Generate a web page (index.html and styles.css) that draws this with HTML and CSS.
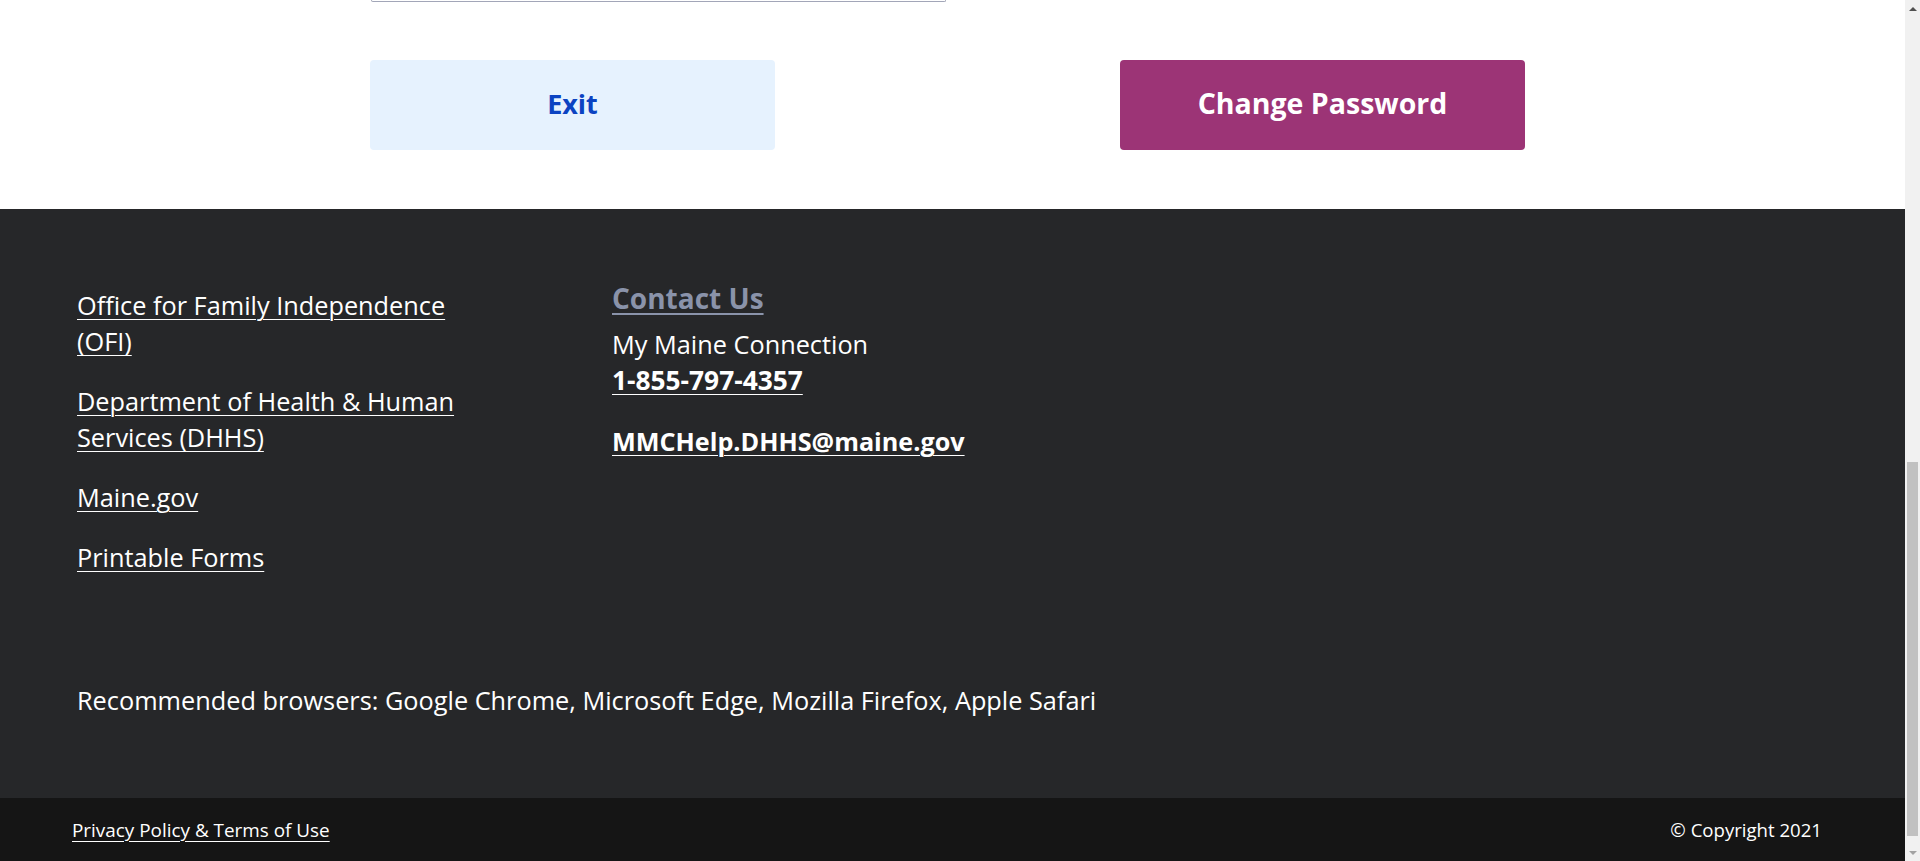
FILE: index.html
```html
<!DOCTYPE html>
<html lang="en">
<head>
<meta charset="utf-8">
<title>Change Password - My Maine Connection</title>
<link rel="stylesheet" href="styles.css">
</head>
<body>
<div class="window">
  <div class="page">
    <section class="form-tail">
      <div class="input-stub"></div>
      <div class="actions">
        <button class="btn btn-exit" type="button">Exit</button>
        <button class="btn btn-primary" type="button">Change Password</button>
      </div>
    </section>
    <footer class="site-footer">
      <div class="footer-main">
        <div class="footer-cols">
          <ul class="link-list">
            <li><a href="#">Office for Family Independence (OFI)</a></li>
            <li><a href="#">Department of Health &amp; Human Services (DHHS)</a></li>
            <li><a href="#">Maine.gov</a></li>
            <li><a href="#">Printable Forms</a></li>
          </ul>
          <div class="contact">
            <a class="contact-title" href="#">Contact Us</a>
            <p class="contact-name">My Maine Connection</p>
            <a class="contact-phone" href="#">1-855-797-4357</a>
            <a class="contact-mail" href="#">MMCHelp.DHHS@maine.gov</a>
          </div>
        </div>
        <p class="browsers">Recommended browsers: Google Chrome, Microsoft Edge, Mozilla Firefox, Apple Safari</p>
      </div>
      <div class="footer-bar">
        <a href="#" class="privacy">Privacy Policy &amp; Terms of Use</a>
        <span class="copyright">© Copyright 2021</span>
      </div>
    </footer>
  </div>
  <div class="scrollbar">
    <div class="sb-btn sb-up"><span class="arrow-up"></span></div>
    <div class="sb-track"><div class="sb-thumb"></div></div>
    <div class="sb-btn sb-down"><span class="arrow-down"></span></div>
  </div>
</div>
</body>
</html>
```

FILE: styles.css
```css
* { box-sizing: border-box; }
html, body { margin: 0; padding: 0; height: 100%; overflow: hidden; }
body {
  font-family: "Open Sans", "Noto Sans", sans-serif;
  background: #ffffff;
  color: #ffffff;
}
.window { display: flex; height: 861px; }
.page { flex: 1; display: flex; flex-direction: column; min-width: 0; }

/* form tail */
.form-tail { background: #fff; padding-bottom: 59px; }
.input-stub {
  margin-left: 371px;
  width: 575px;
  height: 2px;
  border: 1px solid #a2a6b8;
  border-top: none;
  border-radius: 0 0 4px 4px;
}
.actions {
  display: flex;
  gap: 345px;
  margin-top: 58px;
  padding-left: 370px;
}
.btn {
  width: 405px;
  height: 90px;
  padding: 0 0 4px;
  border: none;
  border-radius: 4px;
  font-family: "Open Sans", "Noto Sans", sans-serif;
  font-weight: 700;
  font-size: 28.5px;
  cursor: pointer;
}
.btn-exit { background: #e6f2fe; color: #0b43c2; font-size: 27px; }
.btn-primary { background: #9c3476; color: #ffffff; }

/* footer */
.site-footer { flex: 1; display: flex; flex-direction: column; background: #262729; }
.footer-main { flex: 1; padding: 78px 0 0 77px; }
.footer-cols { display: grid; grid-template-columns: 535px 1fr; }
.link-list {
  list-style: none;
  margin: 0;
  padding: 0;
  width: 395px;
  display: flex;
  flex-direction: column;
  gap: 24px;
}
.link-list a, .contact a, .footer-bar a { color: #ffffff; text-decoration: underline; text-underline-offset: 4px; text-decoration-thickness: 1px; }
.link-list li { font-size: 25.3px; line-height: 36px; }
.contact { display: flex; flex-direction: column; align-items: flex-start; }
.contact-title {
  font-size: 28px;
  font-weight: 700;
  line-height: 22px;
}
.contact .contact-title { color: #8a93aa; text-decoration-thickness: 2px; }
.contact-name { margin: 17px 0 0; font-size: 25.3px; line-height: 36px; }
.contact-phone { font-size: 26.3px; font-weight: 700; line-height: 36px; }
.contact-mail { margin-top: 25px; font-size: 25.2px; font-weight: 700; line-height: 36px; }
.browsers { margin: 107px 0 0; font-size: 25.3px; line-height: 36px; }

.footer-bar {
  height: 63px;
  background: #151515;
  display: flex;
  align-items: center;
  justify-content: space-between;
  padding: 0 83px 0 72px;
  font-size: 18.6px;
}
.privacy { font-size: 18.9px; }

/* scrollbar */
.scrollbar { width: 15px; background: #f1f1f1; display: flex; flex-direction: column; }
.sb-btn { height: 17px; display: flex; align-items: center; justify-content: center; }
.arrow-up { width: 0; height: 0; border-left: 4px solid transparent; border-right: 4px solid transparent; border-bottom: 4px solid #505050; }
.arrow-down { width: 0; height: 0; border-left: 4px solid transparent; border-right: 4px solid transparent; border-top: 4px solid #a3a3a3; }
.sb-track { flex: 1; display: flex; flex-direction: column; justify-content: flex-end; padding: 0 2px 8px; }
.sb-thumb { height: 374px; background: #c1c1c1; }
```
